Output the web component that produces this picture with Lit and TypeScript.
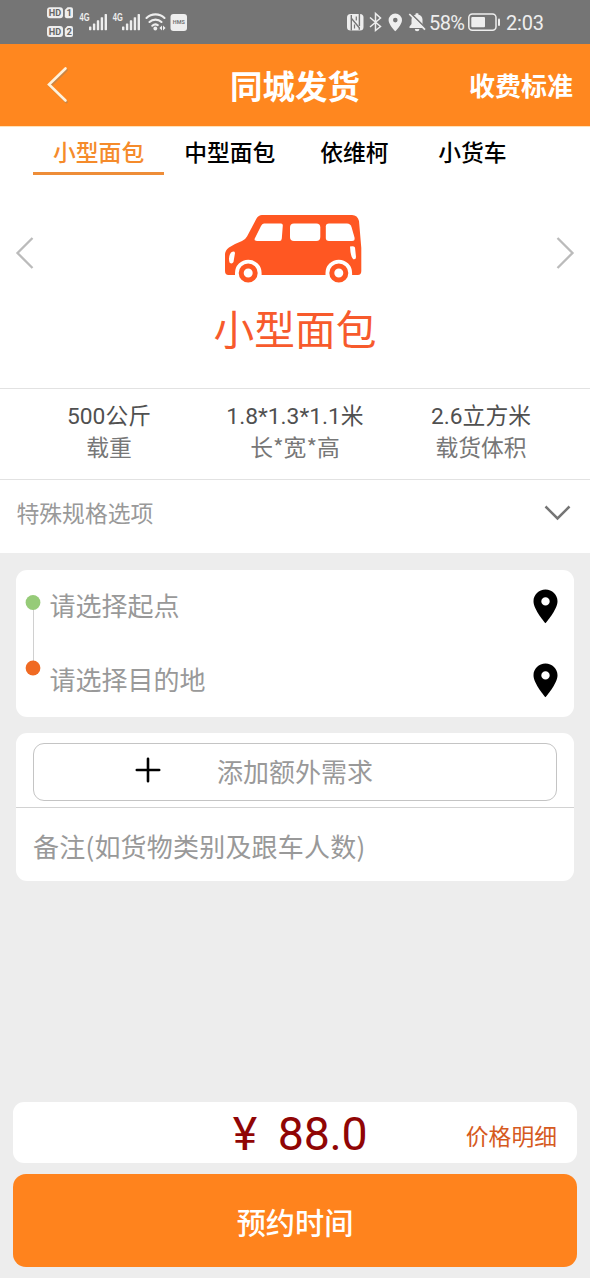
import { LitElement, html, css, svg } from "lit";
import { customElement, state } from "lit/decorators.js";
import { classMap } from "lit/directives/class-map.js";

@customElement("status-bar")
class StatusBar extends LitElement {
  static styles = css`
    :host {
      display: flex;
      justify-content: space-between;
      align-items: center;
      box-sizing: border-box;
      height: 44px;
      padding: 0 47px 0 46px;
      background: #757575;
      color: #eee;
      font: 20px/44px Roboto, "Noto Sans CJK SC", sans-serif;
    }
    svg {
      display: block;
      flex: none;
    }
    .right {
      display: flex;
      align-items: center;
    }
    .percent {
      width: 38px;
      margin-left: 3px;
      letter-spacing: -0.6px;
      padding-top: 2px;
    }
    .time {
      width: 37px;
      margin-left: 5px;
      letter-spacing: -0.2px;
      padding-top: 2px;
    }
    .tag {
      font: bold 9.5px Roboto, sans-serif;
      fill: #666;
    }
    .net {
      font: bold 10.5px "Liberation Sans", sans-serif;
      fill: #eee;
    }
    .hms {
      font: bold 5px Roboto, sans-serif;
      fill: #777;
    }
  `;

  private bars(x: number) {
    return [0, 1, 2, 3, 4].map(
      (i) => svg`<rect x=${x + i * 3.9} y=${26.5 - i * 3.1} width="2.4" height=${3.7 + i * 3.1} rx="0.6"/>`
    );
  }

  private sim(y: number, n: string) {
    return svg`
      <rect x="1" y=${y} width="16" height="11" rx="3"/>
      <path d=${`M21.5 ${y}H25a2 2 0 0 1 2 2v7a2 2 0 0 1-2 2h-4.2a2 2 0 0 1-2-2v-6.200z`}/>
      <text class="tag" x="2.800" y=${y + 9} textLength="12.400" lengthAdjust="spacingAndGlyphs">HD</text>
      <text class="tag" x="20.400" y=${y + 9}>${n}</text>`;
  }

  render() {
    return html`
      <svg width="142" height="44" viewBox="0 0 142 44" fill="#eee">
        ${this.sim(7.3, "1")} ${this.sim(26, "2")}
        <text class="net" x="33.500" y="21" textLength="10" lengthAdjust="spacingAndGlyphs">4G</text>
        ${this.bars(43)}
        <text class="net" x="66.800" y="21" textLength="10" lengthAdjust="spacingAndGlyphs">4G</text>
        ${this.bars(76)}
        <g fill="none" stroke="#eee" stroke-width="2.1" stroke-linecap="round">
          <path d="M100.500 18a13 13 0 0 1 18 0M103.500 22a8.800 8.800 0 0 1 12 0M106.300 25.700a4.800 4.800 0 0 1 5.500-.6"/>
        </g>
        <circle cx="109.300" cy="28.500" r="1.900"/>
        <path d="M116 25.500v5l-2.600-2.500zM117 25.500v5l2.600-2.500z"/>
        <rect x="124.500" y="14" width="16.500" height="17" rx="3"/>
        <text class="hms" x="126.800" y="24.300" textLength="12" lengthAdjust="spacingAndGlyphs">HMS</text>
      </svg>
      <div class="right">
        <svg width="80" height="44" viewBox="346 0 80 44" fill="#eee">
          <rect x="347" y="14" width="16.500" height="16.500" rx="3.500"/>
          <path d="M351.300 30.500V18.500M359.400 14v12" stroke="#757575" stroke-width="1.400"/>
          <path d="M351.300 15v3.200l8 9.500v2" fill="none" stroke="#757575" stroke-width="1.400"/>
          <path d="M354.500 24.500v4M356.300 16.500v4" stroke="#757575" stroke-width="1.200"/>
          <path d="M370 17.500l10.500 9-5 4V13.500l5 4.500-10.500 9" fill="none" stroke="#eee" stroke-width="1.500"/>
          <path fill-rule="evenodd" d="M395.300 13.500a6.700 6.700 0 0 1 6.700 6.700c0 4.500-6.700 11-6.700 11s-6.700-6.500-6.700-11a6.700 6.700 0 0 1 6.700-6.700zm0 4.300a2.300 2.300 0 1 0 0 4.600 2.300 2.300 0 0 0 0-4.600z"/>
          <path d="M409.500 28v-1.500l2-2.500v-4.500a5.500 5.500 0 0 1 4.200-5v-1.200h2.600v1.200a5.500 5.500 0 0 1 4.200 5v4.500l2 2.500V28zM414.800 29h4.600a2.300 2.300 0 0 1-4.600 0z"/>
          <path d="M411 13.500l15 15" stroke="#757575" stroke-width="1.700"/>
          <path d="M409.300 14l15.700 15.700" stroke="#eee" stroke-width="1.700"/>
        </svg>
        <span class="percent">58%</span>
        <svg width="34" height="44" viewBox="0 0 34 44" fill="#eee">
          <rect x="1.800" y="14" width="27.200" height="16.200" rx="3.500" fill="none" stroke="#eee" stroke-width="1.500"/>
          <rect x="4.300" y="17" width="13.700" height="10.300" rx="1"/>
          <rect x="31" y="18.500" width="2" height="7.500" rx="1"/>
        </svg>
        <span class="time">2:03</span>
      </div>
    `;
  }
}

@customElement("app-root")
class AppRoot extends LitElement {
  @state() private selected = 0;

  private vehicles = ["小型面包", "中型面包", "依维柯", "小货车"];
  private specs = [
    ["500公斤", "载重"],
    ["1.8*1.3*1.1米", "长*宽*高"],
    ["2.6立方米", "载货体积"],
  ];

  static styles = css`
    :host {
      display: flex;
      flex-direction: column;
      box-sizing: border-box;
      width: 100%;
      height: 1278px;
      background: #ededed;
      color: #000;
      font-family: "Noto Sans CJK SC", sans-serif;
      overflow: hidden;
    }
    svg {
      display: block;
      flex: none;
    }
    header {
      display: grid;
      grid-template-columns: 1fr auto 1fr;
      align-items: center;
      flex: none;
      height: 82px;
      padding: 0 17px 0 46px;
      background: #ff871f;
      color: #fff;
      font-weight: 700;
    }
    .title {
      font-size: 32.5px;
      line-height: 48px;
      margin-left: -29px;
    }
    .fees {
      justify-self: end;
      font-size: 26px;
      line-height: 40px;
    }
    .panel {
      flex: none;
      height: 427px;
      background: #fff;
    }
    .tabs {
      display: flex;
      box-sizing: border-box;
      height: 49px;
      padding: 0 33px;
      border-top: 1px solid #ffe2b8;
    }
    .tab {
      box-sizing: border-box;
      min-width: 118px;
      padding: 0 20px;
      text-align: center;
      font-size: 22.8px;
      font-weight: 500;
      line-height: 49px;
      border-bottom: 3px solid transparent;
    }
    .tab.on {
      color: #f58b2b;
      border-color: #ee8d38;
    }
    .carousel {
      display: flex;
      justify-content: space-between;
      align-items: flex-start;
      box-sizing: border-box;
      height: 213px;
      padding: 38px 15px 0;
    }
    .arrow {
      padding-top: 23px;
    }
    .vehicle {
      display: flex;
      flex-direction: column;
      align-items: center;
    }
    .vehicle svg {
      margin-right: 4px;
    }
    .name {
      margin-top: 14px;
      color: #f75a2c;
      font-size: 40.7px;
      line-height: 60px;
    }
    .specs {
      display: grid;
      grid-template-columns: repeat(3, 1fr);
      box-sizing: border-box;
      height: 92px;
      padding: 12px 16px 0;
      border: solid #e2e2e2;
      border-width: 1px 0;
      text-align: center;
      font-size: 22.8px;
      line-height: 31px;
    }
    .value {
      color: #505050;
      font-family: Roboto, "Noto Sans CJK SC", sans-serif;
    }
    .label {
      margin-top: -1px;
      color: #777;
    }
    .options {
      display: flex;
      justify-content: space-between;
      align-items: center;
      height: 65px;
      padding: 0 19px 0 16.5px;
      color: #999;
      font-size: 22.8px;
    }
    .card {
      flex: none;
      box-sizing: border-box;
      margin: 17px 16px 0;
      height: 147px;
      border-radius: 11px;
      background: #fff;
      color: #999;
      font-size: 26px;
    }
    .route {
      display: flex;
      padding: 0 16.5px 0 9px;
    }
    .stops {
      flex: 1;
      margin-left: 8.5px;
    }
    .stop {
      display: flex;
      justify-content: space-between;
      align-items: center;
      height: 74px;
      line-height: 69px;
    }
    .stop span {
      height: 74px;
    }
    .stop svg {
      margin-bottom: 2px;
    }
    .extra {
      margin-top: 16px;
      height: 148px;
      padding-top: 10px;
    }
    .add {
      display: grid;
      grid-template-columns: 1fr auto 1fr;
      align-items: center;
      box-sizing: border-box;
      height: 58px;
      margin: 0 17px 6px;
      border: 1px solid #c4c4c4;
      border-radius: 11px;
      line-height: 54px;
    }
    .add span {
      height: 56px;
    }
    .plus {
      justify-self: center;
      padding: 0 0 5px 45px;
    }
    .note {
      border-top: 1px solid #d2d2d2;
      padding: 0 17px;
      line-height: 75px;
      letter-spacing: 0.2px;
    }
    .price {
      display: grid;
      grid-template-columns: 1fr auto 1fr;
      align-items: center;
      flex: none;
      height: 61px;
      margin: auto 13px 0;
      padding: 0 20px;
      box-sizing: border-box;
      border-radius: 11px;
      background: #fff;
    }
    .amount {
      grid-column: 2;
      display: flex;
      gap: 21px;
      padding: 2px 0 0 10px;
      color: #900505;
      font: 46.5px/60px Roboto, "Noto Sans CJK SC", sans-serif;
      letter-spacing: -0.3px;
    }
    .detail {
      justify-self: end;
      padding-top: 5px;
      color: #d65a1e;
      font-size: 22.8px;
      line-height: 40px;
    }
    .book {
      flex: none;
      height: 93px;
      margin: 11px 13px;
      border-radius: 13px;
      background: #ff831d;
      color: #fff;
      text-align: center;
      font-size: 29.2px;
      font-weight: 500;
      line-height: 94px;
    }
  `;

  private pin() {
    return html`<svg width="25" height="35" viewBox="0 0 25 35">
      <path fill-rule="evenodd" d="M12.500.5c6.700 0 12 5.200 12 11.700 0 8.500-12 22-12 22s-12-13.500-12-22C.5 5.700 5.800.5 12.500.5zm0 7.700a4.200 4.200 0 1 0 0 8.400 4.200 4.200 0 0 0 0-8.400z"/>
    </svg>`;
  }

  private van() {
    return html`<svg width="138" height="71" viewBox="224 213 138 71">
      <path fill="#ff5722" d="M262 215H352q5.500 0 7 6l2.300 27V271q0 4-3.500 4H228.500q-3.500 0-3.500-4V255q0-5 4-7.500 5-3.500 13-6.500 3-1 5-4.500l9.500-18q2-3.500 5.500-3.500z"/>
      <g fill="#fff">
        <path d="M264 223.500h17q2 0 1.800 2l-1 13q-.2 2.500-2.300 2.500H257q-3.500 0-2-3l6-12q1-2.500 3-2.500z"/>
        <rect x="290" y="223.500" width="30.300" height="17.500" rx="4"/>
        <path d="M329 223.500h18q3.500 0 4.500 3.500l3 10.500q.8 3.500-2.500 3.500h-23q-3.200 0-3.200-3v-11.500q0-3 3.200-3z"/>
        <path d="M231 252.500q3.500-2 4 .5l-1.500 9q-1.500 2.500-4 .5-1.500-6 1.500-10zM350 246.500q4-1 5 1l1 9.500q0 3-2.800 2.200-2.700-2-3.200-12.700z"/>
        <path d="M235 276v-3a13.300 13.300 0 0 1 26.600 0v3zM325.500 276v-3a13.300 13.300 0 0 1 26.600 0v3z"/>
      </g>
      <g fill="none" stroke="#ff5722" stroke-width="5">
        <circle cx="248.200" cy="273" r="7"/><circle cx="338.800" cy="273" r="7"/>
      </g>
    </svg>`;
  }

  render() {
    return html`
      <status-bar></status-bar>
      <header>
        <svg width="24" height="38" viewBox="0 0 24 38" fill="none" stroke-width="2.600" stroke-linecap="round">
          <path d="M20.500 4L4 20l16.500 16" stroke="#c98545"/>
          <path d="M19.500 2.500L3 18.500l16.500 16" stroke="#fff2dc"/>
        </svg>
        <div class="title">同城发货</div>
        <div class="fees">收费标准</div>
      </header>
      <section class="panel">
        <nav class="tabs">
          ${this.vehicles.map(
            (v, i) => html`<div class=${classMap({ tab: true, on: i === this.selected })}
              @click=${() => (this.selected = i)}>${v}</div>`
          )}
        </nav>
        <div class="carousel">
          <svg class="arrow" width="20" height="34" viewBox="0 0 20 34" fill="none" stroke="#bbb" stroke-width="2.300">
            <path d="M17.500 2L2.500 17l15 15"/>
          </svg>
          <div class="vehicle">${this.van()}<div class="name">${this.vehicles[this.selected]}</div></div>
          <svg class="arrow" width="20" height="34" viewBox="0 0 20 34" fill="none" stroke="#bbb" stroke-width="2.300">
            <path d="M2.500 2l15 15-15 15"/>
          </svg>
        </div>
        <div class="specs">
          ${this.specs.map(([v, l]) => html`<div><div class="value">${v}</div><div class="label">${l}</div></div>`)}
        </div>
        <div class="options">
          特殊规格选项
          <svg width="27" height="18" viewBox="0 0 27 18" fill="none" stroke="#757575" stroke-width="2.500">
            <path d="M1.500 2.500l12 12 12-12"/>
          </svg>
        </div>
      </section>
      <section class="card route">
        <svg width="16" height="147" viewBox="0 0 16 147">
          <path d="M8.500 39v52" stroke="#d0d0d0"/>
          <circle cx="8" cy="32.500" r="7.400" fill="#96cb78"/>
          <circle cx="8" cy="98" r="7.400" fill="#f06a23"/>
        </svg>
        <div class="stops">
          <div class="stop"><span>请选择起点</span>${this.pin()}</div>
          <div class="stop"><span>请选择目的地</span>${this.pin()}</div>
        </div>
      </section>
      <section class="card extra">
        <div class="add">
          <svg class="plus" width="26" height="26" viewBox="0 0 26 26" stroke="#000" stroke-width="2.600" stroke-linecap="round">
            <path d="M13 1.800v22.400M1.800 13h22.400"/>
          </svg>
          <span>添加额外需求</span>
        </div>
        <div class="note">备注(如货物类别及跟车人数)</div>
      </section>
      <section class="price">
        <div class="amount"><span>¥</span><span>88.0</span></div>
        <div class="detail">价格明细</div>
      </section>
      <div class="book">预约时间</div>
    `;
  }
}
